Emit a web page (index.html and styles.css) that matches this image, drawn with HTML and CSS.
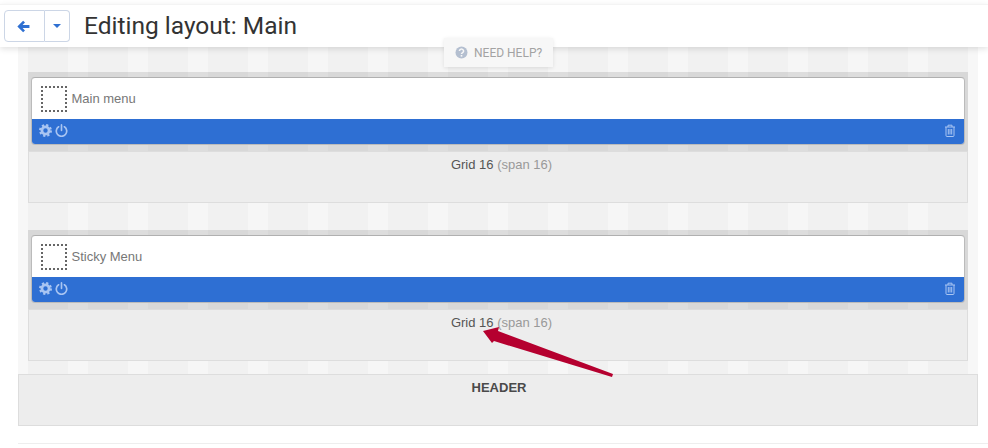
FILE: index.html
```html
<!DOCTYPE html>
<html lang="en">

<head>
    <meta charset="UTF-8" />
    <title>Editing layout: Main</title>
    <link rel="stylesheet" href="styles.css">
</head>

<body>
    <div class="topbar">
        <div class="btn-group">
            <button class="btn btn-back" type="button">
                <svg width="13" height="13" viewBox="0 0 14 14"><path fill="#2f70d2" d="M6.6 .8 .4 7l6.2 6.2 2-2L6 8.6h7.4V5.4H6l2.6-2.6z"/></svg>
            </button>
            <button class="btn btn-caret" type="button"><span class="caret"></span></button>
        </div>
        <h1>Editing layout: Main</h1>
    </div>

    <div class="help-tab">
        <svg width="13" height="13" viewBox="0 0 13 13"><circle cx="6.5" cy="6.5" r="6" fill="#b4bfd0"/><path d="M4.4 5a2.1 1.9 0 1 1 3.2 1.6c-.8.5-1.1.8-1.1 1.5" fill="none" stroke="#f7f7f7" stroke-width="1.5"/><rect x="5.7" y="9" width="1.6" height="1.6" fill="#f7f7f7"/></svg>
        <span>NEED HELP?</span>
    </div>

    <div class="section">
        <div class="rows">
            <div class="row">
                <div class="row-head">
                    <div class="module">
                        <div class="module-body">
                            <span class="module-thumb"></span>
                            <span class="module-name">Main menu</span>
                        </div>
                        <div class="module-bar">
                            <svg class="icon" width="13" height="13" viewBox="0 0 13 13"><circle cx="6.5" cy="6.5" r="3.6" fill="none" stroke="#a9c5f2" stroke-width="2.8"/><circle cx="6.5" cy="6.5" r="5.4" fill="none" stroke="#a9c5f2" stroke-width="2.2" stroke-dasharray="2.2 2.04"/></svg>
                            <svg class="icon" width="13" height="13" viewBox="0 0 14 14"><path d="M3.9 3a5.6 5.6 0 1 0 6.2 0M7 1v5.8" fill="none" stroke="#a9c5f2" stroke-width="1.8" stroke-linecap="round"/></svg>
                            <svg class="icon icon-trash" width="12" height="13" viewBox="0 0 12 13"><path d="M1 3h10M2 3v8.5a1 1 0 0 0 1 1h6a1 1 0 0 0 1-1V3M4 3V1.2h4V3M4.3 5v5.5M6 5v5.5M7.7 5v5.5" fill="none" stroke="#a9c5f2"/></svg>
                        </div>
                    </div>
                </div>
                <div class="grid-label">Grid 16 <span class="span-note">(span 16)</span></div>
            </div>

            <div class="row">
                <div class="row-head">
                    <div class="module">
                        <div class="module-body">
                            <span class="module-thumb"></span>
                            <span class="module-name">Sticky Menu</span>
                        </div>
                        <div class="module-bar">
                            <svg class="icon" width="13" height="13" viewBox="0 0 13 13"><circle cx="6.5" cy="6.5" r="3.6" fill="none" stroke="#a9c5f2" stroke-width="2.8"/><circle cx="6.5" cy="6.5" r="5.4" fill="none" stroke="#a9c5f2" stroke-width="2.2" stroke-dasharray="2.2 2.04"/></svg>
                            <svg class="icon" width="13" height="13" viewBox="0 0 14 14"><path d="M3.9 3a5.6 5.6 0 1 0 6.2 0M7 1v5.8" fill="none" stroke="#a9c5f2" stroke-width="1.8" stroke-linecap="round"/></svg>
                            <svg class="icon icon-trash" width="12" height="13" viewBox="0 0 12 13"><path d="M1 3h10M2 3v8.5a1 1 0 0 0 1 1h6a1 1 0 0 0 1-1V3M4 3V1.2h4V3M4.3 5v5.5M6 5v5.5M7.7 5v5.5" fill="none" stroke="#a9c5f2"/></svg>
                        </div>
                    </div>
                </div>
                <div class="grid-label">Grid 16 <span class="span-note">(span 16)</span></div>
            </div>
        </div>
    </div>

    <div class="header-block">HEADER</div>
    <div class="next-block"></div>

    <svg class="arrow" width="988" height="448" viewBox="0 0 988 448"><polygon fill="#b5002f" points="483,331 499,327 498,331 613,374 612,377 494,341 492,343"/></svg>
</body>

</html>
```

FILE: styles.css
```css
body {
    font-family: 'Liberation Sans', Arial, sans-serif;
    font-size: 13px;
    color: #555;
    background: #fff;
    margin: 0;
    padding: 0;
    overflow: hidden;
}

.topbar {
    position: relative;
    z-index: 2;
    display: flex;
    align-items: center;
    gap: 14px;
    box-sizing: border-box;
    height: 43px;
    margin-top: 4px;
    padding: 0 0 0 4px;
    background: #fff;
    border-top: 1px solid #f4f4f4;
    box-shadow: 0 2px 6px rgba(0, 0, 0, 0.12);
}

.btn-group {
    display: flex;
    height: 32px;
}

.btn {
    display: flex;
    align-items: center;
    justify-content: center;
    padding: 0;
    background: #fff;
    border: 1px solid #ccd6e6;
}

.btn-back {
    width: 41px;
    padding-right: 2px;
    border-radius: 4px 0 0 4px;
}

.btn-caret {
    width: 25px;
    border-left: 0;
    border-radius: 0 4px 4px 0;
}

.caret {
    width: 0;
    height: 0;
    border-left: 4px solid transparent;
    border-right: 4px solid transparent;
    border-top: 4px solid #2f70d2;
}

h1 {
    margin: 0 0 2px;
    font-family: 'Roboto', sans-serif;
    font-size: 24.5px;
    font-weight: 400;
    color: #333;
}

.help-tab {
    position: absolute;
    z-index: 3;
    top: 38px;
    left: 444px;
    display: flex;
    align-items: center;
    gap: 6px;
    box-sizing: border-box;
    width: 109px;
    height: 29px;
    padding-left: 11px;
    background: #f7f7f7;
    box-shadow: 0 1px 4px rgba(0, 0, 0, 0.1);
    font-family: 'Roboto', sans-serif;
    font-size: 12px;
    color: #a3a3a3;
}

.section {
    margin: 0 10px 0 18px;
    padding: 0 10px;
    background: #f7f7f7;
}

.rows {
    padding: 25px 0 13px;
    background-image: repeating-linear-gradient(90deg, #f1f1f1 0, #f1f1f1 40px, #f6f6f6 40px, #f6f6f6 60px);
}

.row {
    margin-bottom: 27px;
}

.row:last-child {
    margin-bottom: 0;
}

.row-head {
    padding: 5px 3px 6px;
    background: rgba(0, 0, 0, 0.1);
}

.module {
    border: 1px solid #bbb;
    border-top-color: #b0b0b0;
    border-radius: 4px;
    overflow: hidden;
    background: #fff;
}

.module-body {
    display: flex;
    align-items: center;
    gap: 4.5px;
    height: 41px;
    padding-left: 9px;
}

.module-thumb {
    box-sizing: border-box;
    width: 26px;
    height: 26px;
    border: 2px dotted #666;
}

.module-name {
    color: #777;
}

.module-bar {
    display: flex;
    align-items: center;
    gap: 3px;
    box-sizing: border-box;
    height: 25px;
    padding: 0 8px 2px 7px;
    background: #2e6fd3;
}

.icon-trash {
    margin-left: auto;
}

.grid-label {
    box-sizing: border-box;
    height: 52px;
    padding: 5px 0 0 7px;
    text-align: center;
    background: #ededed;
    border: 1px solid #ddd;
}

.span-note {
    color: #999;
}

.header-block {
    box-sizing: border-box;
    height: 52px;
    margin: 0 10px 0 18px;
    padding: 5px 0 0 2px;
    text-align: center;
    font-weight: bold;
    color: #4a4a4a;
    background: #ededed;
    border: 1px solid #ddd;
}

.next-block {
    height: 5px;
    margin-top: 17px;
    margin-left: 18px;
    border-top: 1px solid #eee;
}

.arrow {
    position: absolute;
    z-index: 4;
    top: 0;
    left: 0;
    pointer-events: none;
}
```
